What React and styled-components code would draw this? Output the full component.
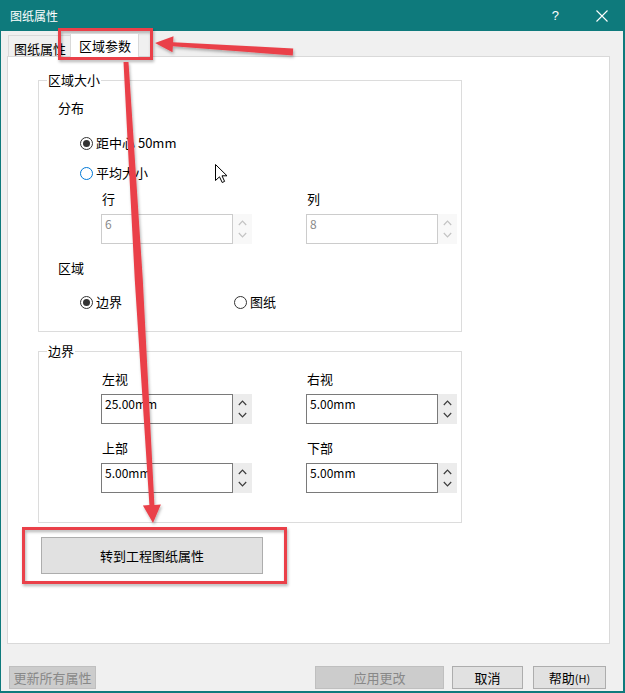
import React from "react";
import styled, { createGlobalStyle } from "styled-components";

const GlobalStyle = createGlobalStyle`
  html, body { margin: 0; padding: 0; background: #fff; }
  body {
    font-family: "Noto Sans CJK SC", "Noto Sans", sans-serif;
    font-size: 13px;
    color: #000;
  }
  * { box-sizing: border-box; }
`;

const TEAL = "#0e7a7c";
const RED = "#ea414a";

export default function App() {
  return (
    <>
      <GlobalStyle />
      <Window>
        <TitleBar>
          <TitleText>图纸属性</TitleText>
          <HelpGlyph>?</HelpGlyph>
          <svg width="12" height="12" viewBox="0 0 12 12">
            <path d="M0.5 0.5 L11.5 11.5 M11.5 0.5 L0.5 11.5" stroke="#fff" strokeWidth="1.1" fill="none" />
          </svg>
        </TitleBar>

        <Body>
          <TabStrip>
            <Tab>图纸属性</Tab>
            <Tab $active>区域参数</Tab>
          </TabStrip>

          <Panel>
            <Group $mt={23} $pb={21}>
              <GroupTitle>区域大小</GroupTitle>
              <SubHeading $mt={12}>分布</SubHeading>
              <RadioRow $mt={19}>
                <Radio checked label="距中心 50mm" />
              </RadioRow>
              <RadioRow $mt={14}>
                <Radio focus label="平均大小" />
              </RadioRow>
              <Fields $mt={10}>
                <Field label="行" value="6" disabled />
                <Field label="列" value="8" disabled />
              </Fields>
              <SubHeading $mt={16}>区域</SubHeading>
              <RadioRow $mt={18}>
                <Radio checked label="边界" />
                <Radio label="图纸" />
              </RadioRow>
            </Group>

            <Group $mt={19} $pb={29}>
              <GroupTitle>边界</GroupTitle>
              <Fields $mt={12}>
                <Field label="左视" value="25.00mm" />
                <Field label="右视" value="5.00mm" />
                <Field label="上部" value="5.00mm" />
                <Field label="下部" value="5.00mm" />
              </Fields>
            </Group>

            <BigButton>转到工程图纸属性</BigButton>
          </Panel>

          <Footer>
            <FooterButton $w={87} disabled>更新所有属性</FooterButton>
            <FooterRight>
              <FooterButton $w={129} disabled>应用更改</FooterButton>
              <FooterButton $w={71} $ml={8}>取消</FooterButton>
              <FooterButton $w={73} $ml={10}>帮助<Small>(H)</Small></FooterButton>
            </FooterRight>
          </Footer>
        </Body>

        <Annotations />
      </Window>
    </>
  );
}

function Radio({ checked, focus, label }) {
  return (
    <RadioItem>
      <RadioCircle $focus={focus}>{checked && <RadioDot />}</RadioCircle>
      <span>{label}</span>
    </RadioItem>
  );
}

function Field({ label, value, disabled }) {
  const c = disabled ? "#c3c3c3" : "#3c3c3c";
  return (
    <div>
      <FieldLabel>{label}</FieldLabel>
      <SpinBox>
        <SpinInput $disabled={disabled}>{value}</SpinInput>
        <SpinButtons $disabled={disabled}>
          <svg width="9" height="6" viewBox="0 0 9 6">
            <path d="M0.8 5 L4.5 1.2 L8.2 5" stroke={c} strokeWidth="1.2" fill="none" />
          </svg>
          <svg width="9" height="6" viewBox="0 0 9 6">
            <path d="M0.8 1 L4.5 4.8 L8.2 1" stroke={c} strokeWidth="1.2" fill="none" />
          </svg>
        </SpinButtons>
      </SpinBox>
    </div>
  );
}

// red marks drawn over the screenshot
function Annotations() {
  return (
    <Overlay width="625" height="693" viewBox="0 0 625 693">
      <defs>
        <filter id="sh" x="-20%" y="-20%" width="140%" height="140%">
          <feDropShadow dx="1" dy="2" stdDeviation="1.5" floodColor="#000" floodOpacity="0.3" />
        </filter>
      </defs>
      <g filter="url(#sh)" fill={RED}>
        <rect x="59.5" y="29.5" width="92" height="29" fill="none" stroke={RED} strokeWidth="3" />
        <rect x="23.5" y="528.5" width="262" height="54" fill="none" stroke={RED} strokeWidth="3" />
        <polygon points="293.2,48.5 173.1,42.2 173.5,36.2 155,43 172.5,52.2 172.9,46.2 292.8,55.5" />
        <polygon points="128.5,61.9 142.8,279.8 154.4,504.9 160.9,504.5 153,523 142.9,505.5 149.4,505.1 134.8,280.2 123.5,62.1" />
      </g>
      <path
        transform="translate(215 164)"
        d="M0.5 0.5 L0.5 16.5 L4.5 12.8 L7.2 18.5 L9.6 17.4 L7 11.8 L12 11.8 Z"
        fill="#fff"
        stroke="#000"
        strokeWidth="1"
      />
    </Overlay>
  );
}

const Window = styled.div`
  position: relative;
  width: 625px;
  height: 693px;
  background: #f0f0f0;
  border: 1px solid ${TEAL};
  border-right-width: 2px;
  border-bottom-width: 2px;
  display: flex;
  flex-direction: column;
  overflow: hidden;
`;

const TitleBar = styled.div`
  height: 30px;
  flex: none;
  background: ${TEAL};
  color: #fff;
  display: flex;
  align-items: center;
  padding: 0 15px 0 9px;
  font-size: 12px;
  line-height: 16px;
`;

const TitleText = styled.div`
  flex: 1;
`;

const HelpGlyph = styled.span`
  font-family: "Liberation Sans", sans-serif;
  font-size: 13px;
  margin-right: 37px;
`;

const Body = styled.div`
  flex: 1;
  padding: 2px 0 0 6px;
`;

const TabStrip = styled.div`
  height: 23px;
  display: flex;
  align-items: flex-start;
`;

const Tab = styled.div`
  position: relative;
  z-index: ${(p) => (p.$active ? 1 : 0)};
  height: ${(p) => (p.$active ? 24 : 21)}px;
  margin-top: ${(p) => (p.$active ? 0 : 2)}px;
  margin-left: ${(p) => (p.$active ? -1 : 1)}px;
  padding: ${(p) => (p.$active ? "2px 7px 0 8px" : "3px 4px 0 5px")};
  background: ${(p) => (p.$active ? "#fff" : "#f0f0f0")};
  border: 1px solid #d9d9d9;
  border-bottom: none;
  line-height: 19px;
  font-size: 13px;
`;

const Panel = styled.div`
  width: 603px;
  height: 588px;
  background: #fff;
  border: 1px solid #d9d9d9;
  display: flex;
  flex-direction: column;
  align-items: flex-start;
`;

const Group = styled.div`
  width: 424px;
  margin: ${(p) => p.$mt}px 0 0 30px;
  padding-bottom: ${(p) => p.$pb}px;
  border: 1px solid #dcdcdc;
`;

const GroupTitle = styled.div`
  width: fit-content;
  margin: -9px 0 0 8px;
  padding: 0 1px;
  background: #fff;
  line-height: 16px;
`;

const SubHeading = styled.div`
  margin: ${(p) => p.$mt}px 0 0 19px;
  line-height: 16px;
`;

const RadioRow = styled.div`
  display: grid;
  grid-template-columns: 154px 154px;
  margin: ${(p) => p.$mt}px 0 0 41px;
  line-height: 16px;
`;

const RadioItem = styled.div`
  display: flex;
  align-items: center;
  gap: 3px;
`;

const RadioCircle = styled.span`
  width: 13px;
  height: 13px;
  border-radius: 50%;
  border: 1px solid ${(p) => (p.$focus ? "#0078d7" : "#333")};
  background: #fff;
  display: flex;
  align-items: center;
  justify-content: center;
`;

const RadioDot = styled.span`
  width: 7px;
  height: 7px;
  border-radius: 50%;
  background: #333;
`;

const Fields = styled.div`
  display: grid;
  grid-template-columns: 205px 152px;
  row-gap: 16px;
  margin: ${(p) => p.$mt}px 0 0 62px;
`;

const FieldLabel = styled.div`
  margin: 0 0 7px 1px;
  line-height: 16px;
`;

const SpinBox = styled.div`
  display: flex;
  height: 30px;
`;

const SpinInput = styled.div`
  width: 132px;
  border: 1px solid ${(p) => (p.$disabled ? "#cccccc" : "#7a7a7a")};
  background: #fff;
  color: ${(p) => (p.$disabled ? "#8a8a8a" : "#000")};
  padding: 1px 3px;
  font-size: 12px;
  line-height: 16px;
`;

const SpinButtons = styled.div`
  width: 19px;
  background: ${(p) => (p.$disabled ? "#f8f8f8" : "#ececec")};
  display: flex;
  flex-direction: column;
  align-items: center;
  justify-content: space-around;
  padding: 3px 0;
`;

const BigButton = styled.div`
  width: 222px;
  height: 37px;
  margin: 14px 0 0 33px;
  background: #e1e1e1;
  border: 1px solid #adadad;
  display: flex;
  align-items: center;
  justify-content: center;
  font-size: 13px;
`;

const Footer = styled.div`
  width: 599px;
  margin-top: 22px;
  padding-left: 2px;
  display: flex;
  justify-content: space-between;
`;

const FooterRight = styled.div`
  display: flex;
`;

const FooterButton = styled.div`
  width: ${(p) => p.$w}px;
  height: 23px;
  margin-left: ${(p) => p.$ml || 0}px;
  background: ${(p) => (p.disabled ? "#cccccc" : "#e1e1e1")};
  border: 1px solid ${(p) => (p.disabled ? "#bfbfbf" : "#adadad")};
  color: ${(p) => (p.disabled ? "#888888" : "#000")};
  display: flex;
  align-items: center;
  justify-content: center;
  font-size: 13px;
  line-height: 16px;
`;

const Small = styled.span`
  font-size: 11px;
`;

const Overlay = styled.svg`
  position: absolute;
  top: -1px;
  left: -1px;
  pointer-events: none;
`;
